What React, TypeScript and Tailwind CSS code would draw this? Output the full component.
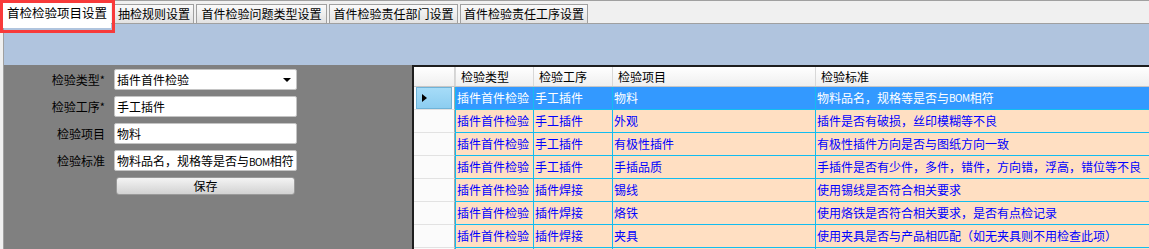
import React from "react";

const Bom = () => <span className="text-[10px] tracking-[-0.5px]">BOM</span>;

const rows: React.ReactNode[][] = [
  ["插件首件检验", "手工插件", "物料", <>物料品名，规格等是否与<Bom />相符</>],
  ["插件首件检验", "手工插件", "外观", "插件是否有破损，丝印模糊等不良"],
  ["插件首件检验", "手工插件", "有极性插件", "有极性插件方向是否与图纸方向一致"],
  ["插件首件检验", "手工插件", "手插品质", "手插件是否有少件，多件，错件，方向错，浮高，错位等不良"],
  ["插件首件检验", "插件焊接", "锡线", "使用锡线是否符合相关要求"],
  ["插件首件检验", "插件焊接", "烙铁", "使用烙铁是否符合相关要求，是否有点检记录"],
  ["插件首件检验", "插件焊接", "夹具", "使用夹具是否与产品相匹配（如无夹具则不用检查此项）"],
  ["", "", "", ""],
];

const widths = ["w-[78px]", "w-[79px]", "w-[203px]", "flex-1"];

const tabClass =
  "flex h-[19px] items-center justify-center border border-b-0 border-[#a0a0a0] bg-gradient-to-b from-[#fafafa] to-[#e2e2e2] whitespace-nowrap";

function Field({ label, value, combo }: { label: React.ReactNode; value: React.ReactNode; combo?: boolean }) {
  return (
    <>
      <div className="flex h-[21px] items-center justify-end whitespace-nowrap">{label}</div>
      <div className="flex h-[21px] items-center justify-between overflow-hidden rounded-[2px] border border-[#c4c4c4] bg-white pl-[2px] pr-[5px] whitespace-nowrap">
        <span>{value}</span>
        {combo && <span className="h-0 w-0 border-x-[4px] border-t-[4px] border-x-transparent border-t-black" />}
      </div>
    </>
  );
}

export default function App() {
  return (
    <div className="relative h-[249px] w-[1149px] overflow-hidden bg-[#f0f0f0] font-['Noto_Sans_CJK_SC',sans-serif] text-[12px] leading-none text-black">
      {/* tab strip */}
      <div className="flex h-[24px] items-end border-y border-[#a0a0a0] pl-[3px]">
        <div className="relative z-10 -mb-[5px] flex h-[25px] w-[108px] items-center justify-center bg-white pb-[4px] text-[12.5px]">
          首检检验项目设置
        </div>
        <div className={`${tabClass} ml-[3px] w-[80px]`}>抽检规则设置</div>
        <div className={`${tabClass} ml-[2px] w-[131px]`}>首件检验问题类型设置</div>
        <div className={`${tabClass} ml-[2px] w-[129px]`}>首件检验责任部门设置</div>
        <div className={`${tabClass} ml-[2px] w-[128px]`}>首件检验责任工序设置</div>
      </div>

      {/* highlight box */}
      <div className="absolute left-0 top-0 z-20 h-[33px] w-[115px] border-[3px] border-[#f83a3a]" />

      <div className="pl-[3px]">
        <div className="border-l border-[#a0a0a0]">
          <div className="h-[41px] bg-[#b0c4de]" />
          <div className="flex h-[184px]">
            {/* form */}
            <div className="w-[408px] bg-[#808080] pt-[4px]">
              <div className="grid grid-cols-[101px_183px] gap-x-[9px] gap-y-[6px]">
                <Field label={<>检验类型<span className="text-[11px]">*</span></>} value="插件首件检验" combo />
                <Field label={<>检验工序<span className="text-[11px]">*</span></>} value="手工插件" />
                <Field label="检验项目" value="物料" />
                <Field label="检验标准" value={<>物料品名，规格等是否与<Bom />相符</>} />
                <div />
                <button className="ml-[2px] flex h-[18px] w-[179px] items-center justify-center rounded-[3px] border border-[#9a9a9a] bg-gradient-to-b from-[#f4f4f4] to-[#d2d2d2]">
                  保存
                </button>
              </div>
            </div>

            {/* grid */}
            <div className="flex-1 border-l-2 border-t-2 border-[#1e1e1e] bg-white">
              <div className="flex h-[20px] border-b border-[#c6c6c6] bg-gradient-to-b from-white to-[#efefef]">
                <div className="w-[41px] border-r border-[#d4d4d4]" />
                {["检验类型", "检验工序", "检验项目", "检验标准"].map((h, i) => (
                  <div key={h} className={`flex items-center border-l border-[#d8d8d8] pl-[5px] ${widths[i]}`}>
                    {h}
                  </div>
                ))}
              </div>

              {rows.map((r, ri) => {
                const sel = ri === 0;
                return (
                  <div key={ri} className="flex h-[23px]">
                    <div className="w-[41px] border-r border-b border-[#a8a8a8] border-b-[#e2e2e2] bg-[#fbfbfb] px-[2px]">
                      {sel && (
                        <div className="flex h-full items-center border border-[#6fb3d8] bg-gradient-to-b from-[#a6dcf8] to-[#8ccdf0] pl-[5px]">
                          <span className="h-0 w-0 border-y-[4px] border-l-[5px] border-y-transparent border-l-black" />
                        </div>
                      )}
                    </div>
                    {r.map((c, ci) => (
                      <div
                        key={ci}
                        className={`flex items-center overflow-hidden whitespace-nowrap border-l border-b border-[#12bdf0] pl-[1px] ${widths[ci]} ${
                          sel ? "bg-[#3399ff] text-white" : "bg-[#ffdfc2] text-[#0000ff]"
                        }`}
                      >
                        {c}
                      </div>
                    ))}
                  </div>
                );
              })}
            </div>
          </div>
        </div>
      </div>
    </div>
  );
}
